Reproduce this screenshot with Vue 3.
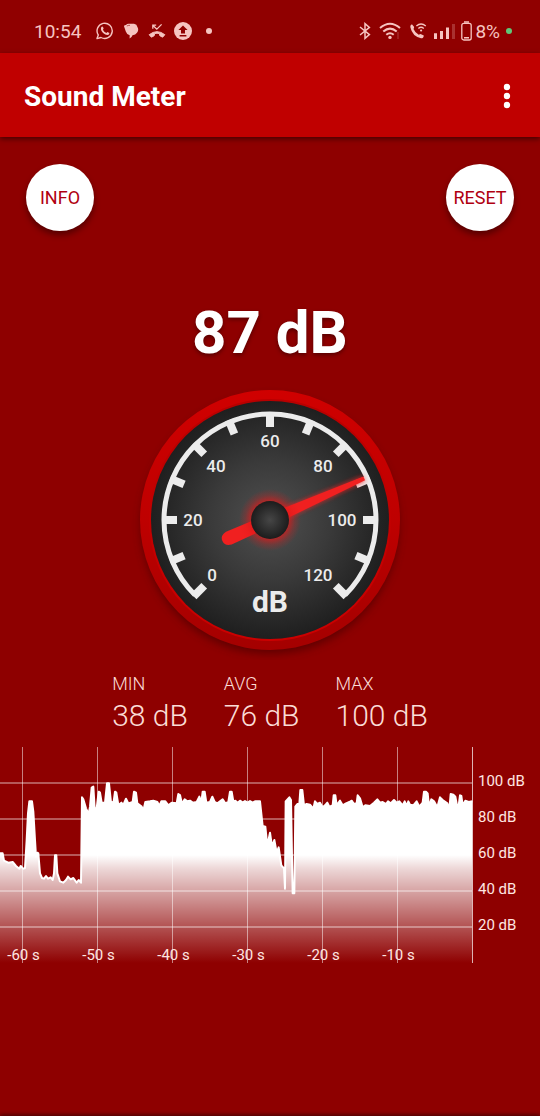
<script setup>
const stats = [
  { label: 'MIN', value: '38 dB' },
  { label: 'AVG', value: '76 dB' },
  { label: 'MAX', value: '100 dB' },
]

const ticks = Array.from({ length: 13 }, (_, i) => -135 + i * 22.5)
const gaugeLabels = [
  { text: '0', x: 82, y: 201 },
  { text: '20', x: 63, y: 146 },
  { text: '40', x: 86, y: 92 },
  { text: '60', x: 140, y: 67 },
  { text: '80', x: 193, y: 92 },
  { text: '100', x: 212, y: 146 },
  { text: '120', x: 188, y: 201 },
]

const levels = [100, 80, 60, 40, 20].map((db, i) => ({ db, y: 36 + i * 36 }))
const times = [60, 50, 40, 30, 20, 10].map((s, i) => ({ s, x: 22.5 + i * 75 }))

// Recorded samples as x,y pairs at three units per chart pixel.
const samples = `0,319 8,319 12,341 25,347 38,345 48,357 58,365 62,357 70,365 75,363 80,279 84,199 88,163
96,163 100,194 105,279 108,329 112,317 115,319 120,379 126,393 132,395 138,387 144,395 152,391 158,399
162,379 165,325 169,325 172,379 180,403 190,407 198,399 204,389 212,397 220,393 230,407 236,399 243,407
246,151 250,157 258,184 266,201 270,179 275,122 280,119 284,184 290,184 296,134 300,137 305,167 315,167
321,109 327,109 333,167 341,164 345,134 349,137 355,174 364,167 370,174 378,155 385,169 398,165 402,134
408,137 412,169 425,179 430,191 436,165 450,163 460,161 472,165 478,177 484,163 496,163 505,175 515,167
530,169 535,141 540,144 546,171 554,157 562,163 570,161 578,167 590,165 598,149 604,167 608,134 614,134
619,167 630,165 637,149 644,165 652,169 660,163 668,157 676,169 685,165 690,134 695,134 700,163 706,161
713,167 720,161 728,167 735,162 743,167 750,162 758,167 765,163 780,163 788,237 796,239 802,297 810,257
816,299 823,279 830,317 836,301 844,355 852,364 855,425 857,163 868,151 873,159 878,439 883,439 886,179
892,171 898,171 901,129 907,129 912,175 920,171 930,173 940,185 945,163 952,171 960,167 968,181 975,175
982,167 988,179 998,175 1001,145 1006,145 1010,175 1020,161 1028,175 1038,169 1048,165 1055,161 1062,171
1070,169 1073,145 1080,154 1088,181 1096,175 1110,177 1122,167 1132,157 1140,167 1148,165 1158,171
1164,163 1172,169 1182,159 1190,167 1198,163 1208,175 1214,163 1220,177 1225,163 1230,173 1240,175
1250,163 1258,179 1268,167 1272,134 1278,134 1283,139 1287,179 1294,157 1302,163 1312,181 1320,151
1328,159 1342,169 1348,187 1352,141 1360,143 1366,149 1374,191 1380,145 1384,147 1388,175 1396,161
1406,165 1417,163`
  .split(/\s+/)
  .map((pair) => pair.split(',').map((v) => v / 3))

const linePath = 'M' + samples.map((p) => p.join(' ')).join('L')
const areaPath = linePath + 'L472 216L0 216Z'
</script>

<template>
  <div class="screen">
    <div class="status">
      <span class="clock">10:54</span>
      <svg class="icon whatsapp" width="18" height="18" viewBox="0 0 18 18">
        <path d="M2.3 13A7.6 7.6 0 1 1 5 15.5L1 16.6Z" fill="none" stroke="currentColor" stroke-width="1.4" stroke-linejoin="round" />
        <path d="M5.2 5.2Q6.2 3.8 7 5L7.6 6.5Q7.6 7.1 6.9 7.7Q8 9.9 10.4 10.9L11.4 9.9L13.4 11Q13.4 13.2 11.2 13Q7.2 12.3 5.4 8.7Q4.5 7 5.2 5.2Z" fill="currentColor" />
      </svg>
      <svg class="icon chat" width="16" height="18" viewBox="0 0 16 18">
        <path d="M3 3Q4 1.6 6 1.8L11 1.8Q14 2.3 14.4 5Q16.2 8 14 10.8Q12.5 13 9.5 13.2Q9 15 6.6 16.5L6.7 13.2Q3.6 12.4 2.8 9.5L1 4.2Q1 3 3 3Z" fill="currentColor" />
        <path d="M3.8 4Q5.2 3.2 7 3.3" fill="none" stroke="#900000" stroke-width=".6" />
      </svg>
      <svg class="icon missed" width="18" height="18" viewBox="0 0 18 18">
        <path d="M1.2 12.7Q9 6.6 16.8 12.7L14.6 15.2L11.8 13.7L11.4 11.6Q9 10.8 6.6 11.6L6.2 13.7L3.4 15.2Z" fill="currentColor" stroke="currentColor" stroke-linejoin="round" />
        <path d="M4.8 6.8V3.2H8.2M5 3.5L8.8 7.2L13.6 2.4" fill="none" stroke="currentColor" stroke-width="1.3" />
      </svg>
      <svg class="icon upload" width="18" height="18" viewBox="0 0 18 18">
        <circle cx="9" cy="9" r="9" fill="currentColor" />
        <path d="M9 3.4L13.6 8H11V11.6H7V8H4.4Z M5.6 13H12.4V14.4H5.6Z" fill="#900000" />
      </svg>
      <span class="more-dot"></span>
      <span class="spacer"></span>
      <svg class="icon" width="12" height="18" viewBox="0 0 12 18">
        <path d="M1 5L10.4 12.6L6 16.4V1.6L10.4 5.4L1 13" fill="none" stroke="currentColor" stroke-width="1.5" />
      </svg>
      <svg class="icon wifi" width="22" height="18" viewBox="0 0 22 18">
        <g fill="none" stroke="currentColor" stroke-width="2">
          <path d="M1 6Q11-2.6 21 6" />
          <path d="M4.3 9.6Q11 3.6 17.7 9.6" />
          <path d="M7.3 12.8Q11 9.6 14.7 12.8" />
        </g>
        <circle cx="11" cy="15.4" r="1.7" fill="currentColor" />
        <path d="M19 10V17" stroke="currentColor" opacity=".3" />
      </svg>
      <svg class="icon call" width="18" height="18" viewBox="0 0 18 18">
        <path d="M1.3 5.1Q.9 3.3 2.9 2.3L5 4.8Q5.4 5.7 4.5 6.9Q6.2 10.8 9.7 12.7L11.5 11.9L14.8 13.4Q14.6 16.3 12 16.3Q3.3 14.5 1.3 5.1Z" fill="currentColor" />
        <g fill="none" stroke="currentColor" stroke-width="1.3">
          <path d="M7.4 4.1Q12-.1 16.8 4.1" />
          <path d="M9.4 6.5Q12 4.1 14.8 6.5" />
        </g>
        <circle cx="12.1" cy="8.5" r="1.1" fill="currentColor" />
      </svg>
      <svg class="icon signal" width="22" height="18" viewBox="0 0 22 18">
        <path d="M1.5 11.2V17M7.5 9V17M13.5 5.6V17" stroke="currentColor" stroke-width="3" />
        <path d="M19.5 2V17" stroke="currentColor" stroke-width="3" opacity=".25" />
      </svg>
      <svg class="icon battery" width="11" height="20" viewBox="0 0 11 20">
        <rect x=".8" y="2.4" width="9.4" height="16.6" rx="2" fill="none" stroke="currentColor" stroke-width="1.3" />
        <path d="M3 .9H8M3 16.7H8" stroke="currentColor" stroke-width="1.5" />
      </svg>
      <span class="percent">8%</span>
      <span class="active-dot"></span>
    </div>

    <header class="bar">
      <h1>Sound Meter</h1>
      <button class="menu" aria-label="More options">
        <svg width="8" height="26" viewBox="0 0 8 26" fill="#fff">
          <circle cx="4" cy="4" r="3.2" />
          <circle cx="4" cy="13" r="3.2" />
          <circle cx="4" cy="22" r="3.2" />
        </svg>
      </button>
    </header>

    <main>
      <div class="actions">
        <button class="round">INFO</button>
        <button class="round">RESET</button>
      </div>

      <div class="reading">87 dB</div>

      <svg class="gauge" width="280" height="280" viewBox="0 0 280 280">
        <defs>
          <radialGradient id="face" cx=".5" cy=".5" r=".5">
            <stop offset="0" stop-color="#505050" />
            <stop offset=".5" stop-color="#3a3a3a" />
            <stop offset="1" stop-color="#1f1f1f" />
          </radialGradient>
          <radialGradient id="hub">
            <stop offset="0" stop-color="#464646" />
            <stop offset="1" stop-color="#1c1c1c" />
          </radialGradient>
          <radialGradient id="glow">
            <stop offset=".6" stop-color="#e01818" stop-opacity=".7" />
            <stop offset=".8" stop-color="#e01818" stop-opacity=".25" />
            <stop offset="1" stop-color="#e01818" stop-opacity="0" />
          </radialGradient>
          <linearGradient id="rim" x1="0" y1="0" x2="0" y2="1">
            <stop offset="0" stop-color="#d00000" />
            <stop offset=".5" stop-color="#be0000" />
            <stop offset="1" stop-color="#a40000" />
          </linearGradient>
          <linearGradient id="rimEdge" x1="0" y1="0" x2="0" y2="1">
            <stop offset="0" stop-color="#b80000" />
            <stop offset="1" stop-color="#cc0000" />
          </linearGradient>
          <filter id="soft" x="-20%" y="-20%" width="140%" height="140%">
            <feGaussianBlur stdDeviation="4" />
          </filter>
          <filter id="halo" x="-20%" y="-100%" width="140%" height="300%">
            <feGaussianBlur stdDeviation="2" />
          </filter>
        </defs>
        <circle cx="140" cy="145" r="129" fill="#400000" opacity=".6" filter="url(#soft)" />
        <circle cx="140" cy="140" r="130" fill="url(#rim)" />
        <circle cx="140" cy="140" r="121" fill="url(#rimEdge)" />
        <circle cx="140" cy="140" r="119" fill="url(#face)" />
        <g fill="none" stroke="#ececec">
          <path d="M65 215A106 106 0 1 1 215 215" stroke-width="5" />
          <path v-for="angle in ticks" :key="angle" d="M140 32V47" stroke-width="8" :transform="`rotate(${angle} 140 140)`" />
        </g>
        <text v-for="mark in gaugeLabels" :key="mark.text" class="mark" :x="mark.x" :y="mark.y">{{ mark.text }}</text>
        <text class="unit" x="140" y="232">dB</text>
        <g transform="rotate(-23.8 140 140)" fill="#f02020">
          <path d="M150 134L243 137V143L150 146Z" opacity=".7" filter="url(#halo)" />
          <path d="M95 133Q88 134 88 140T95 147L140 146L243 142V138L140 134Z" />
        </g>
        <circle cx="140" cy="140" r="31" fill="url(#glow)" />
        <circle cx="140" cy="140" r="19" fill="url(#hub)" />
      </svg>

      <dl class="stats">
        <div v-for="stat in stats" :key="stat.label">
          <dt>{{ stat.label }}</dt>
          <dd>{{ stat.value }}</dd>
        </div>
      </dl>

      <svg class="chart" viewBox="0 0 540 220">
        <defs>
          <linearGradient id="area" gradientUnits="userSpaceOnUse" x1="0" y1="0" x2="0" y2="216">
            <stop offset=".5" stop-color="#fff" />
            <stop offset=".56" stop-color="#fff" stop-opacity=".85" />
            <stop offset="1" stop-color="#fff" stop-opacity="0" />
          </linearGradient>
        </defs>
        <path :d="areaPath" fill="url(#area)" />
        <path :d="linePath" class="trace" />
        <g class="grid">
          <path v-for="level in levels" :key="level.db" :d="`M0 ${level.y}H472`" stroke-width="2" opacity=".35" />
          <path v-for="time in times" :key="time.s" :d="`M${time.x} 0V216`" opacity=".5" />
          <path d="M472.5 0V216" opacity=".7" />
        </g>
        <text v-for="level in levels" :key="level.db" class="axis" x="478" :y="level.y + 3">{{ level.db }} dB</text>
        <text v-for="time in times" :key="time.s" class="axis middle" :x="time.x + 1" y="213">-{{ time.s }} s</text>
      </svg>
    </main>
    <div class="nav-edge"></div>
  </div>
</template>

<style>
body {
  margin: 0;
  background: #8e0000;
}
</style>

<style scoped>
.screen {
  display: flex;
  flex-direction: column;
  min-height: 100vh;
  background: #8e0000;
  color: #fff;
  font-family: Roboto, "Liberation Sans", sans-serif;
}
.status {
  display: flex;
  align-items: center;
  box-sizing: border-box;
  height: 53px;
  padding: 9px 28px 0 34px;
  background: #900000;
  color: #f6c4c0;
  font-size: 19px;
}
.icon {
  flex: none;
}
.clock {
  width: 62px;
}
.chat {
  margin-left: 9px;
}
.missed {
  margin-left: 9px;
}
.upload {
  margin-left: 8px;
}
.more-dot {
  width: 6px;
  height: 6px;
  margin-left: 14px;
  border-radius: 50%;
  background: currentColor;
}
.spacer {
  flex: 1;
}
.wifi {
  margin-left: 8px;
}
.call {
  margin-left: 8px;
}
.signal {
  margin-left: 7px;
}
.battery {
  margin-left: 5px;
}
.percent {
  margin-left: 3px;
}
.active-dot {
  width: 6px;
  height: 6px;
  margin-left: 6px;
  border-radius: 50%;
  background: #5fc878;
}
.bar {
  display: flex;
  align-items: center;
  justify-content: space-between;
  box-sizing: border-box;
  height: 84px;
  padding: 2px 29px 0 24px;
  background: #c00000;
  box-shadow: 0 2px 5px rgba(0, 0, 0, 0.5);
}
h1 {
  margin: 0;
  padding-top: 2px;
  font-size: 28px;
  line-height: 36px;
  font-weight: 700;
}
button {
  border: 0;
  padding: 0;
  font-family: inherit;
  cursor: pointer;
}
.menu {
  display: flex;
  background: none;
}
main {
  display: flex;
  flex: 1;
  flex-direction: column;
  align-items: center;
}
.actions {
  display: flex;
  align-self: stretch;
  justify-content: space-between;
  padding: 27px 26px 0;
}
.round {
  width: 68px;
  height: 67px;
  border-radius: 50%;
  background: #fff;
  color: #b00010;
  font-size: 18px;
  box-shadow: 0 4px 6px rgba(0, 0, 0, 0.4);
}
.reading {
  margin-top: 67px;
  font-size: 60px;
  line-height: 70px;
  font-weight: 700;
  text-shadow: 0 2px 4px rgba(0, 0, 0, 0.4);
}
.gauge {
  display: block;
  margin-top: 12px;
}
.mark {
  fill: #ececec;
  font-size: 17px;
  font-weight: 500;
  text-anchor: middle;
}
.unit {
  fill: #ececec;
  font-size: 30px;
  font-weight: 700;
  text-anchor: middle;
}
.stats {
  display: flex;
  gap: 36px;
  margin: 12px 0 0;
  color: #fbdcd6;
  font-weight: 300;
}
dt {
  font-size: 18px;
  line-height: 24px;
}
dd {
  margin: 0;
  font-size: 30px;
  line-height: 40px;
}
.chart {
  display: block;
  width: 100%;
  margin-top: 11px;
}
.trace {
  fill: none;
  stroke: #fff;
  stroke-width: 2;
  stroke-linejoin: round;
}
.grid {
  fill: none;
  stroke: #fff;
}
.axis {
  fill: #ffe6e2;
  font-size: 15px;
}
.middle {
  text-anchor: middle;
}
.nav-edge {
  height: 4px;
  background: #fff;
  box-shadow: 0 -1px 4px rgba(0, 0, 0, 0.6);
}
</style>
